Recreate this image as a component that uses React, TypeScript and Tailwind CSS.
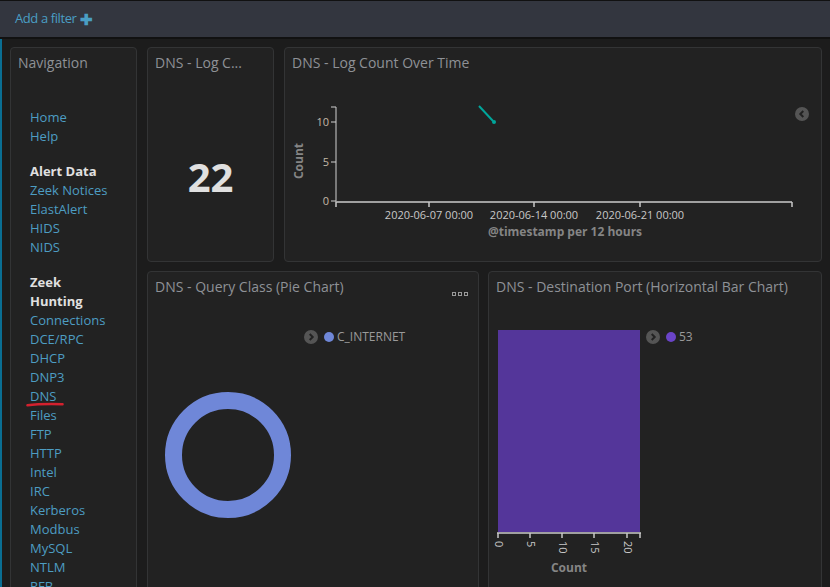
import React from "react";

const font = { fontFamily: '"Open Sans", "Liberation Sans", sans-serif' };

const alertLinks = ["Zeek Notices", "ElastAlert", "HIDS", "NIDS"];
const huntLinks = [
  "Connections",
  "DCE/RPC",
  "DHCP",
  "DNP3",
  "DNS",
  "Files",
  "FTP",
  "HTTP",
  "Intel",
  "IRC",
  "Kerberos",
  "Modbus",
  "MySQL",
  "NTLM",
  "RFB",
];

function Panel({
  title,
  className,
  children,
}: {
  title: string;
  className?: string;
  children?: React.ReactNode;
}) {
  return (
    <div
      className={`relative shrink-0 overflow-hidden rounded-[4px] border border-[#333435] bg-[#222222] ${className ?? ""}`}
    >
      <div className="h-[30px] truncate px-[7px] pt-[5px] text-[14px] leading-[20px] text-[#8e9196]">
        {title}
      </div>
      {children}
    </div>
  );
}

function Toggle({ dir }: { dir: "left" | "right" }) {
  return (
    <svg width="14" height="14" viewBox="0 0 14 14">
      <circle cx="7" cy="7" r="7" fill="#555555" />
      <path
        d={dir === "left" ? "M8.3 4 L5.3 7 L8.3 10" : "M5.7 4 L8.7 7 L5.7 10"}
        stroke="#222"
        strokeWidth="2"
        fill="none"
      />
    </svg>
  );
}

function NavPanel() {
  return (
    <Panel title="Navigation" className="h-[560px] w-[127px]">
      <div className="pl-[19px] pt-[30px] text-[13px] leading-[19px] text-[#4d9dc2]">
        <div>Home</div>
        <div>Help</div>
        <div className="mt-[16px] font-bold text-[#e0e0e0]">Alert Data</div>
        {alertLinks.map((l) => (
          <div key={l}>{l}</div>
        ))}
        <div className="mt-[16px] font-bold text-[#e0e0e0]">
          Zeek
          <br />
          Hunting
        </div>
        {huntLinks.map((l) => (
          <div key={l} className="relative">
            {l}
            {l === "DNS" && (
              <svg
                className="absolute left-[-4px] top-[15px]"
                width="38"
                height="5"
                viewBox="0 0 38 5"
              >
                <path d="M1.5 3.3 Q14 1.6 36.5 2.2" stroke="#d3212e" strokeWidth="2.6" fill="none" strokeLinecap="round" />
              </svg>
            )}
          </div>
        ))}
      </div>
    </Panel>
  );
}

function LineChart() {
  const ticks = [
    { x: 144, label: "2020-06-07 00:00" },
    { x: 249, label: "2020-06-14 00:00" },
    { x: 355, label: "2020-06-21 00:00" },
  ];
  return (
    <svg width="538" height="170" viewBox="0 0 538 170" className="block">
      <line x1="51" y1="29" x2="51" y2="124" stroke="#d0d0d0" strokeWidth="1" />
      {[
        { y: 44, l: "10" },
        { y: 84, l: "5" },
        { y: 123, l: "0" },
      ].map((t) => (
        <g key={t.l}>
          <line x1="46" y1={t.y} x2="51" y2={t.y} stroke="#d0d0d0" />
          <text x="44" y={t.y + 4} textAnchor="end" fontSize="11" fill="#c2b9a8">
            {t.l}
          </text>
        </g>
      ))}
      <line x1="46" y1="29" x2="51" y2="29" stroke="#d0d0d0" />
      <line x1="51" y1="124" x2="507" y2="124" stroke="#a0a0a0" strokeWidth="2" />
      {[51, 144, 249, 355, 507].map((x) => (
        <line key={x} x1={x} y1="124" x2={x} y2="129" stroke="#c8c8c8" strokeWidth="1.5" />
      ))}
      {ticks.map((t) => (
        <text key={t.x} x={t.x} y="141" textAnchor="middle" fontSize="11" fill="#c8c8c8">
          {t.label}
        </text>
      ))}
      <text x="280" y="158" textAnchor="middle" fontSize="12" fontWeight="700" fill="#858585">
        @timestamp per 12 hours
      </text>
      <text
        x="18"
        y="83"
        textAnchor="middle"
        fontSize="12"
        fontWeight="700"
        fill="#858585"
        transform="rotate(-90 18 83)"
      >
        Count
      </text>
      <line x1="194" y1="28" x2="208" y2="43" stroke="#00a69b" strokeWidth="2" />
      <circle cx="209" cy="44" r="2" fill="#00a69b" />
      <g transform="translate(510 29)">
        <circle cx="7" cy="7" r="7" fill="#555555" />
        <path d="M8.3 4 L5.3 7 L8.3 10" stroke="#222" strokeWidth="2" fill="none" />
      </g>
    </svg>
  );
}

function PieChart() {
  return (
    <div className="relative h-[300px]">
      <div className="absolute right-[10px] top-[-10px] flex gap-[2px]">
        {[0, 1, 2].map((i) => (
          <span key={i} className="h-[4px] w-[4px] border border-[#9a9a9a]" />
        ))}
      </div>
      <div className="absolute left-[156px] top-[26px] flex items-center gap-[6px] text-[12px] text-[#9a9a9a]">
        <Toggle dir="right" />
        <span className="flex items-center gap-[3px]">
          <span className="h-[10px] w-[10px] rounded-full bg-[#6f87d8]" />
          C_INTERNET
        </span>
      </div>
      <svg width="332" height="300" viewBox="0 0 332 300" className="block">
        <circle cx="80" cy="153" r="54.5" fill="none" stroke="#6f87d8" strokeWidth="17" />
      </svg>
    </div>
  );
}

function BarChart() {
  const ticks = [
    { x: 10, l: "0" },
    { x: 42, l: "5" },
    { x: 74, l: "10" },
    { x: 106, l: "15" },
    { x: 139, l: "20" },
  ];
  return (
    <div className="relative h-[300px]">
      <div className="absolute left-[157px] top-[26px] flex items-center gap-[6px] text-[12px] text-[#9a9a9a]">
        <Toggle dir="right" />
        <span className="flex items-center gap-[3px]">
          <span className="h-[10px] w-[10px] rounded-full bg-[#6a44c8]" />
          53
        </span>
      </div>
      <svg width="334" height="300" viewBox="0 0 334 300" className="block">
        <rect x="9" y="28" width="142" height="202" fill="#54369a" />
        <line x1="8" y1="231" x2="152" y2="231" stroke="#a0a0a0" strokeWidth="2" />
        <line x1="151" y1="231" x2="151" y2="236" stroke="#c8c8c8" strokeWidth="1.5" />
        {ticks.map((t) => (
          <g key={t.l}>
            <line x1={t.x - 1} y1="231" x2={t.x - 1} y2="236" stroke="#c8c8c8" strokeWidth="1.5" />
            <text
              x={t.x - 1}
              y="239"
              fontSize="11"
              fill="#c8c8c8"
              dominantBaseline="middle"
              textAnchor="start"
              transform={`rotate(90 ${t.x - 1} 239)`}
            >
              {t.l}
            </text>
          </g>
        ))}
        <text x="80" y="270" textAnchor="middle" fontSize="12" fontWeight="700" fill="#858585">
          Count
        </text>
      </svg>
    </div>
  );
}

export default function App() {
  return (
    <div style={font} className="h-[587px] w-[830px] overflow-hidden bg-[#1c1c1c]">
      <div className="flex h-[39px] items-center border-b-2 border-t border-[#111] bg-[#33363f] pl-[15px] text-[13px] text-[#4a9ec4]">
        <span className="tracking-[-0.4px]">Add a filter</span>
        <span className="ml-[3px] text-[15px] font-bold leading-none">✚</span>
      </div>
      <div className="flex h-[548px] border-l-2 border-[#0a6e93] pl-[8px] pt-[8px]">
        <NavPanel />
        <div className="ml-[10px] flex w-[675px] shrink-0 flex-col gap-[9px]">
          <div className="flex h-[215px] shrink-0 gap-[10px]">
            <Panel title="DNS - Log C..." className="w-[127px]">
              <div className="flex h-[184px] items-center justify-center pt-[14px] text-[40px] font-bold text-[#e0e0e0]">
                22
              </div>
            </Panel>
            <Panel title="DNS - Log Count Over Time" className="w-[538px]">
              <LineChart />
            </Panel>
          </div>
          <div className="flex h-[330px] shrink-0 gap-[9px]">
            <Panel title="DNS - Query Class (Pie Chart)" className="w-[332px]">
              <PieChart />
            </Panel>
            <Panel title="DNS - Destination Port (Horizontal Bar Chart)" className="w-[334px]">
              <BarChart />
            </Panel>
          </div>
        </div>
      </div>
    </div>
  );
}
